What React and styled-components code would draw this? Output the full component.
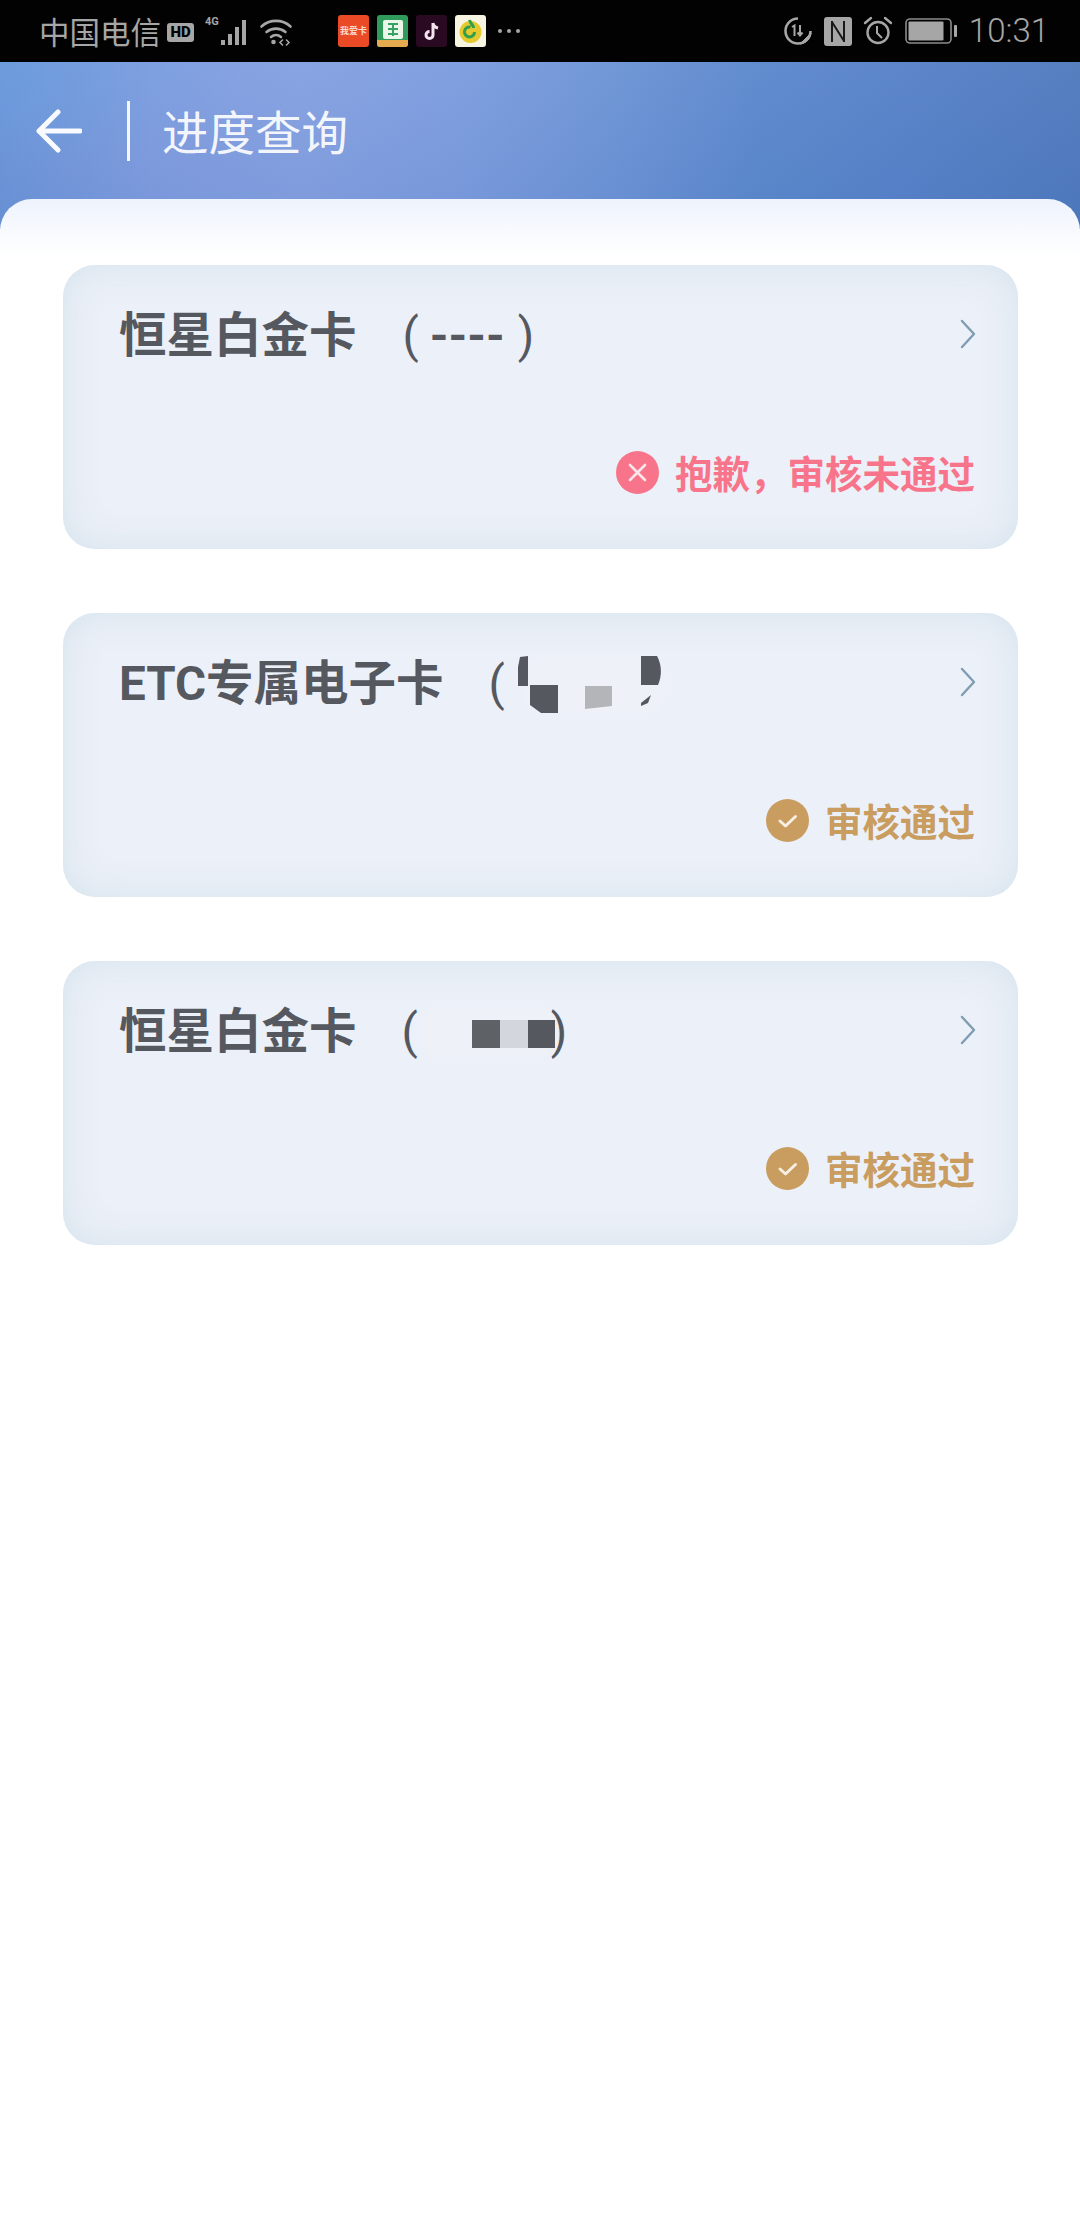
import React from "react";
import styled, { createGlobalStyle } from "styled-components";

const GlobalStyle = createGlobalStyle`
  html, body {
    margin: 0;
    padding: 0;
    background: #fff;
  }
  body {
    font-family: Roboto, "Noto Sans CJK SC", sans-serif;
  }
`;

const Page = styled.div`
  width: 1080px;
  height: 2217px;
  overflow: hidden;
  background: #fff;
`;

const StatusBar = styled.div`
  height: 62px;
  background: #020203;
  display: flex;
  align-items: center;
  justify-content: space-between;
  color: #a6a6a6;
  padding: 0 31px 0 39px;
`;

const StatusGroup = styled.div`
  display: flex;
  align-items: center;
  gap: ${(p) => p.$gap || 0}px;
`;

const Carrier = styled.span`
  font-size: 30.5px;
  line-height: 62px;
  width: 123px;
  white-space: nowrap;
  font-family: "Noto Sans CJK SC", sans-serif;
  font-weight: 400;
`;

const HdBadge = styled.span`
  width: 27px;
  height: 19px;
  margin: 2px 0 0 5px;
  border-radius: 3px;
  background: #a6a6a6;
  color: #020203;
  font-size: 15px;
  font-weight: 900;
  line-height: 19px;
  text-align: center;
`;

const Signal = styled.span`
  position: relative;
  display: block;
  width: 46px;
  height: 32px;
  margin-left: 11px;
`;

const FourG = styled.span`
  position: absolute;
  left: 0;
  top: 1px;
  font-size: 11px;
  font-weight: 700;
  line-height: 12px;
`;

const WifiSlot = styled.span`
  display: block;
  margin-left: 8px;
  height: 29px;
`;

const AppIcons = styled(StatusGroup)`
  margin-left: 45px;
`;

const AppTile = styled.span`
  position: relative;
  display: block;
  width: 31px;
  height: 32px;
  border-radius: 3px;
  overflow: hidden;
`;

const TileText = styled.span`
  position: absolute;
  left: 0;
  right: 0;
  top: 10px;
  text-align: center;
  font-family: "Noto Sans CJK SC", sans-serif;
  font-size: 9px;
  font-weight: 700;
  line-height: 11px;
  color: #fbd9cd;
  white-space: nowrap;
`;

const Dots = styled.span`
  display: flex;
  gap: 5px;
  margin-left: 4px;
  i {
    display: block;
    width: 4px;
    height: 4px;
    border-radius: 50%;
    background: #a6a6a6;
  }
`;

const Clock = styled.span`
  font-size: 33px;
  font-weight: 300;
  line-height: 62px;
`;

const Hero = styled.div`
  height: 167px;
  background:
    radial-gradient(ellipse 260px 110px at 0 0, rgba(100, 160, 225, 0.4), rgba(100, 160, 225, 0)),
    linear-gradient(180deg, rgba(255, 255, 255, 0.04), rgba(40, 80, 160, 0.08)),
    linear-gradient(90deg, #6c95d8 0%, #7f9cdf 14%, #84a0e0 28%, #7c9cde 42%, #6d94d6 56%, #5b88cc 70%, #5681c8 84%, #4f7abd 100%);
`;

const NavBar = styled.div`
  height: 137px;
  display: flex;
  align-items: center;
  padding-left: 36px;
`;

const BackIcon = styled.svg`
  width: 46px;
  height: 46px;
  display: block;
`;

const NavDivider = styled.span`
  width: 3px;
  height: 60px;
  background: rgba(255, 255, 255, 0.92);
  margin: 0 32px 0 45px;
`;

const NavTitle = styled.h1`
  margin: -2px 0 0;
  font-family: "Noto Sans CJK SC", sans-serif;
  font-size: 46.5px;
  font-weight: 400;
  line-height: 60px;
  color: rgba(255, 255, 255, 0.93);
`;

const Sheet = styled.div`
  margin-top: -30px;
  padding: 66px 62px 0 63px;
  border-radius: 32px 32px 0 0;
  background: linear-gradient(180deg, #eef3fc 0, #ffffff 58px);
  display: flex;
  flex-direction: column;
  gap: 64px;
`;

const Card = styled.div`
  height: 284px;
  box-sizing: border-box;
  padding: 40px 43px 0 56px;
  border-radius: 32px;
  background: #ecf0f8;
  box-shadow: inset 0 0 36px rgba(208, 224, 234, 0.85);
  display: flex;
  flex-direction: column;
`;

const CardHead = styled.div`
  height: 62px;
  display: flex;
  align-items: center;
  justify-content: space-between;
`;

const CardTitle = styled.div`
  display: flex;
  align-items: center;
  color: #55585f;
  font-family: Roboto, "Noto Sans CJK SC", sans-serif;
  font-size: 47.5px;
  font-weight: 700;
  line-height: 62px;
  white-space: nowrap;
`;

const Paren = styled.span`
  font-weight: 400;
  margin-left: ${(p) => p.$left || 0}px;
  margin-right: ${(p) => p.$right || 0}px;
`;

const Masked = styled.svg`
  display: block;
  flex: none;
`;

const Chevron = styled.svg`
  width: 20px;
  height: 32px;
  display: block;
  margin-right: -3px;
  margin-top: -4px;
`;

const StatusRow = styled.div`
  margin-top: 83px;
  display: flex;
  align-items: center;
  justify-content: flex-end;
  gap: 16px;
  color: ${(p) => (p.$failed ? "#f8748a" : "#c99c5f")};
`;

const StatusText = styled.span`
  font-family: "Noto Sans CJK SC", sans-serif;
  font-size: 37.5px;
  font-weight: 700;
  line-height: 44px;
  white-space: nowrap;
`;

const StatusIcon = styled.svg`
  width: 43px;
  height: 43px;
  display: block;
  flex: none;
`;

// fullwidth comma written as an escape
const FAILED_TEXT = "抱歉\uFF0C审核未通过";
const PASSED_TEXT = "审核通过";

function SignalIcon() {
  return (
    <Signal>
      <FourG>4G</FourG>
      <svg width="46" height="32" viewBox="0 0 46 32" fill="#a6a6a6">
        <rect x="16" y="25" width="4" height="5" />
        <rect x="23" y="19" width="4" height="11" />
        <rect x="30" y="12" width="4" height="18" />
        <rect x="37" y="5" width="4" height="25" />
      </svg>
    </Signal>
  );
}

function WifiIcon() {
  return (
    <svg width="34" height="29" viewBox="0 0 33 29" fill="none" stroke="#a6a6a6" strokeWidth="2.6" strokeLinecap="round">
      <path d="M2 9.5C10 2 23 2 31 9.5" />
      <path d="M7 15C12.500 10.500 20.500 10.500 26 15" />
      <path d="M11.500 20C14.500 17.500 18.500 17.500 21.500 20" />
      <circle cx="14" cy="25" r="2.300" fill="#a6a6a6" stroke="none" />
      <path d="M23 23l-2.500 2.500L23 28M27 23l2.500 2.500L27 28" strokeWidth="1.600" />
    </svg>
  );
}

function AppIconRed() {
  return (
    <AppTile>
      <svg width="31" height="32" viewBox="0 0 31 32">
        <rect width="31" height="32" fill="#ea4a26" />
      </svg>
      <TileText>我爱卡</TileText>
    </AppTile>
  );
}

function AppIconGreen() {
  return (
    <AppTile>
      <svg width="31" height="32" viewBox="0 0 31 32">
        <rect width="31" height="32" fill="#2f9c5c" />
        <rect x="6" y="5" width="20" height="19" rx="2" fill="#eaf6ea" />
        <path d="M11 9h10M11 14h10M11 19h10M16 8v13" stroke="#36a266" strokeWidth="2" />
        <rect y="25" width="31" height="7" fill="#e7ab4f" />
      </svg>
    </AppTile>
  );
}

function AppIconTikTok() {
  return (
    <AppTile>
      <svg width="31" height="32" viewBox="0 0 31 32">
        <rect width="31" height="32" fill="#2a0a22" />
        <path d="M17 8v12a3.500 3.500 0 1 1-3.500-3.500M17 8c.5 3 2.500 4.500 5 5" fill="none" stroke="#f3e4ee" strokeWidth="3" />
      </svg>
    </AppTile>
  );
}

function AppIconMusic() {
  return (
    <AppTile>
      <svg width="31" height="32" viewBox="0 0 31 32">
        <rect width="31" height="32" fill="#f7f4e2" />
        <circle cx="15.500" cy="17" r="11" fill="#e6c92e" />
        <path d="M14.500 5c1 4 4 5 4 8M15.500 12a5 5 0 1 0 4 5" fill="none" stroke="#2f9f4d" strokeWidth="3" />
      </svg>
    </AppTile>
  );
}

function DataSaverIcon() {
  return (
    <svg width="30" height="30" viewBox="0 0 30 30" fill="none" stroke="#a6a6a6">
      <path d="M15 2.500A12.500 12.500 0 1 0 27.500 15" strokeWidth="2.600" />
      <path d="M17 28l11-11c-.5 5.500-5 10.500-11 11z" fill="#a6a6a6" strokeWidth="1" />
      <path d="M9 11l2.500-1.500V20" strokeWidth="2" />
      <path d="M17 9v10M14.500 16.500L17 19.500l2.500-3" strokeWidth="2" />
    </svg>
  );
}

function NfcIcon() {
  return (
    <svg width="28" height="29" viewBox="0 0 28 29">
      <rect width="28" height="29" rx="3" fill="#a6a6a6" />
      <path d="M8 4v21M8 5l12 19M20 4v21" fill="none" stroke="#1a1a1a" strokeWidth="2" />
    </svg>
  );
}

function AlarmIcon() {
  return (
    <svg width="30" height="30" viewBox="0 0 30 30" fill="none" stroke="#a6a6a6" strokeWidth="2.400">
      <circle cx="15" cy="16.500" r="10.500" />
      <path d="M14 10v7l5 5" strokeWidth="2" />
      <path d="M2 7l6-5M28 7l-6-5" strokeLinecap="round" />
    </svg>
  );
}

function BatteryIcon() {
  return (
    <svg width="53" height="26" viewBox="0 0 53 26">
      <rect x="1" y="1" width="45" height="24" rx="4" fill="none" stroke="#8c8c8c" strokeWidth="1.600" />
      <rect x="3.500" y="3.500" width="35" height="19" rx="1" fill="#a6a6a6" />
      <rect x="49" y="7" width="3" height="12" rx="1" fill="#a6a6a6" />
    </svg>
  );
}

function FailedIcon() {
  return (
    <StatusIcon viewBox="0 0 43 43">
      <circle cx="21.500" cy="21.500" r="21.500" fill="#f8748a" />
      <path d="M14 14l15 15M29 14L14 29" stroke="#f7e6ea" strokeWidth="2.600" strokeLinecap="round" />
    </StatusIcon>
  );
}

function PassedIcon() {
  return (
    <StatusIcon viewBox="0 0 43 43">
      <circle cx="21.500" cy="21.500" r="21.500" fill="#c99c5f" />
      <path d="M14 22l5.500 5L29.500 17.500" fill="none" stroke="#f6efe3" strokeWidth="3" strokeLinecap="round" strokeLinejoin="round" />
    </StatusIcon>
  );
}

// mosaic over the card number, drawn from the picture
function MaskedNumberEtc() {
  return (
    <Masked width="152" height="62" viewBox="0 0 152 62">
      <rect x="12" y="2" width="140" height="58" rx="18" fill="#eef1f8" />
      <path d="M7 4l8-1v30H5V14z" fill="#55585f" />
      <path d="M17 32h28v28H28l-11-8z" fill="#55585f" />
      <path d="M72 33h27v20l-27 3z" fill="#b3b5b9" />
      <path d="M128 3h16c5 9 5 20 1 29h-17z" fill="#55585f" />
      <path d="M128 50l10-8-3 8-7 3z" fill="#55585f" />
    </Masked>
  );
}

function MaskedNumberPlatinum() {
  return (
    <Masked width="134" height="62" viewBox="0 0 134 62">
      <rect x="2" y="6" width="130" height="50" rx="14" fill="#eef1f8" />
      <rect x="51" y="19" width="28" height="28" fill="#5e6166" />
      <rect x="79" y="19" width="28" height="28" fill="#d3d6dc" />
      <rect x="107" y="19" width="27" height="28" fill="#55585f" />
    </Masked>
  );
}

function ApplicationCard({ name, failed, children }) {
  return (
    <Card>
      <CardHead>
        <CardTitle>
          {name}
          {children}
        </CardTitle>
        <Chevron viewBox="0 0 20 32" fill="none" stroke="#7f9db2" strokeWidth="2.400" strokeLinecap="round" strokeLinejoin="round">
          <path d="M4 3l12 13L4 29" />
        </Chevron>
      </CardHead>
      <StatusRow $failed={failed}>
        {failed ? <FailedIcon /> : <PassedIcon />}
        <StatusText>{failed ? FAILED_TEXT : PASSED_TEXT}</StatusText>
      </StatusRow>
    </Card>
  );
}

export default function App() {
  return (
    <Page>
      <GlobalStyle />
      <StatusBar>
        <StatusGroup>
          <Carrier>中国电信</Carrier>
          <HdBadge>HD</HdBadge>
          <SignalIcon />
          <WifiSlot>
            <WifiIcon />
          </WifiSlot>
          <AppIcons $gap={8}>
            <AppIconRed />
            <AppIconGreen />
            <AppIconTikTok />
            <AppIconMusic />
            <Dots>
              <i />
              <i />
              <i />
            </Dots>
          </AppIcons>
        </StatusGroup>
        <StatusGroup $gap={11.3}>
          <DataSaverIcon />
          <NfcIcon />
          <AlarmIcon />
          <BatteryIcon />
          <Clock>10:31</Clock>
        </StatusGroup>
      </StatusBar>
      <Hero>
        <NavBar>
          <BackIcon viewBox="0 0 46 46" fill="none" stroke="rgba(255,255,255,0.95)" strokeWidth="5" strokeLinecap="round" strokeLinejoin="round">
            <path d="M3 23h41M22 4L3 23l19 19" />
          </BackIcon>
          <NavDivider />
          <NavTitle>进度查询</NavTitle>
        </NavBar>
      </Hero>
      <Sheet>
        <ApplicationCard name="恒星白金卡" failed>
          <Paren $left={46} $right={11}>(</Paren>
          ----
          <Paren $left={13}>)</Paren>
        </ApplicationCard>
        <ApplicationCard name="ETC专属电子卡">
          <Paren $left={45} $right={8}>(</Paren>
          <MaskedNumberEtc />
        </ApplicationCard>
        <ApplicationCard name="恒星白金卡">
          <Paren $left={45} $right={3}>(</Paren>
          <MaskedNumberPlatinum />
          <Paren $left={-4}>)</Paren>
        </ApplicationCard>
      </Sheet>
    </Page>
  );
}
